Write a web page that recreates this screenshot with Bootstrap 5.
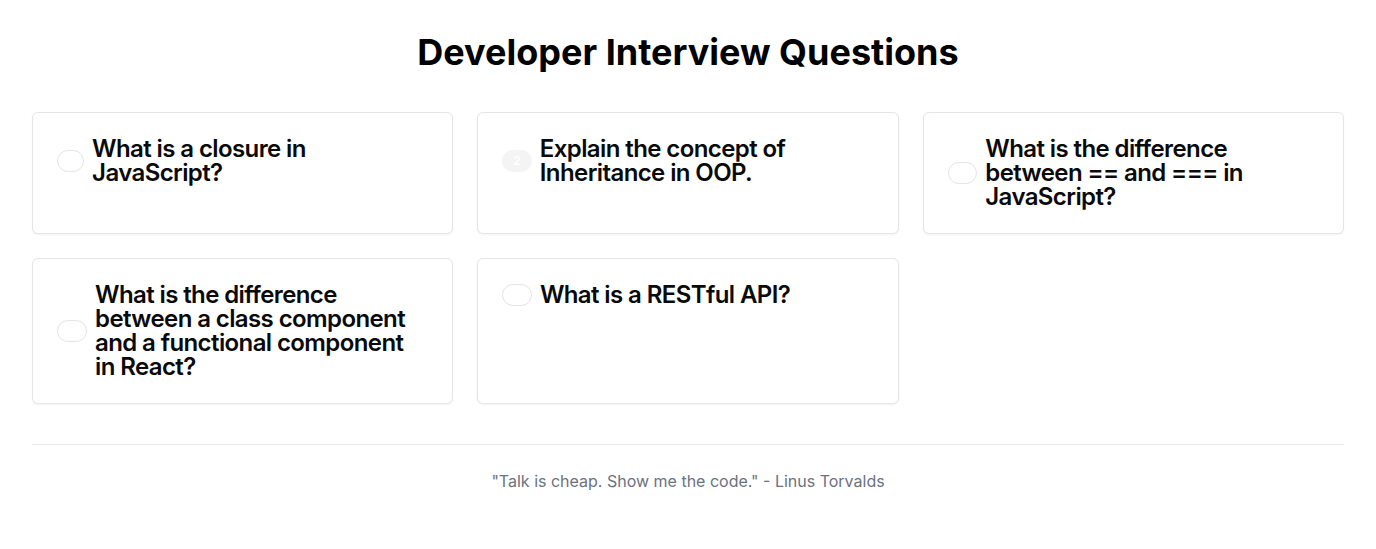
<!DOCTYPE html>
<html lang="en">
<head>
<meta charset="utf-8">
<meta name="viewport" content="width=device-width, initial-scale=1">
<title>Developer Interview Questions</title>
<link href="https://cdn.jsdelivr.net/npm/bootstrap@5.3.0/dist/css/bootstrap.min.css" rel="stylesheet">
<style>
body { font-family: Inter, sans-serif; color: #000; background: #fff; }
.page-title { font-size: 36px; line-height: 40px; font-weight: 700; margin-bottom: 40px; }
.question-card { border: 1px solid #e5e5e5; border-radius: 6px; box-shadow: 0 1px 2px rgba(0,0,0,.05); padding: 24px; }
.question-title { font-size: 24px; line-height: 24px; font-weight: 600; letter-spacing: -0.025em; color: #0a0a0a; }
.pill { font-size: 12px; line-height: 16px; font-weight: 600; letter-spacing: normal; padding: 2px 10px; border: 1px solid #e5e5e5; border-radius: 11px; color: #fff; }
.pill-filled { background: #f4f4f4; border-color: #f4f4f4; }
.page-footer { border-top: 1px solid #e5e7eb; margin-top: 40px; padding-top: 24px; color: #6b7280; font-size: 16px; line-height: 24px; }
</style>
</head>
<body>
<div class="container-fluid p-4">
<main class="p-2">
<h1 class="page-title text-center">Developer Interview Questions</h1>
<div class="row row-cols-1 row-cols-md-2 row-cols-lg-3 g-4">
<div class="col"><article class="card question-card h-100"><h2 class="question-title d-flex align-items-center gap-2 m-0"><span class="pill">1</span><span>What is a closure in JavaScript?</span></h2></article></div>
<div class="col"><article class="card question-card h-100"><h2 class="question-title d-flex align-items-center gap-2 m-0"><span class="pill pill-filled">2</span><span>Explain the concept of Inheritance in OOP.</span></h2></article></div>
<div class="col"><article class="card question-card h-100"><h2 class="question-title d-flex align-items-center gap-2 m-0"><span class="pill">3</span><span>What is the difference between == and === in JavaScript?</span></h2></article></div>
<div class="col"><article class="card question-card h-100"><h2 class="question-title d-flex align-items-center gap-2 m-0"><span class="pill">4</span><span>What is the difference between a class component and a functional component in React?</span></h2></article></div>
<div class="col"><article class="card question-card h-100"><h2 class="question-title d-flex align-items-center gap-2 m-0"><span class="pill">5</span><span>What is a RESTful API?</span></h2></article></div>
</div>
<footer class="page-footer text-center">"Talk is cheap. Show me the code." - Linus Torvalds</footer>
</main>
</div>
<script src="https://cdn.jsdelivr.net/npm/bootstrap@5.3.0/dist/js/bootstrap.bundle.min.js"></script>
</body>
</html>
